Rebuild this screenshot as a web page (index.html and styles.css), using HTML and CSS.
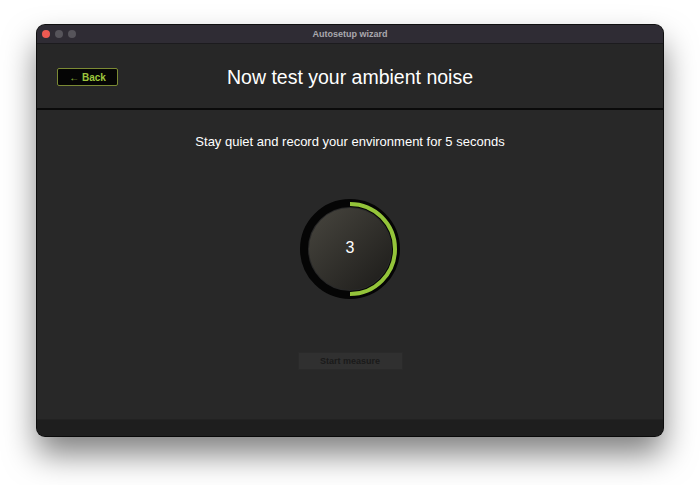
FILE: index.html
```html
<!DOCTYPE html>
<html>
  <head>
    <link rel="stylesheet" href="styles.css">
  </head>
  <body>
    <div class="window">
      <div class="titlebar">
        <div class="lights">
          <span class="light red"></span>
          <span class="light"></span>
          <span class="light"></span>
        </div>
        <div class="wintitle">Autosetup wizard</div>
      </div>

      <div class="header">
        <button class="back">&larr; Back</button>
        <h1>Now test your ambient noise</h1>
      </div>

      <div class="content">
        <p class="hint">Stay quiet and record your environment for 5 seconds</p>

        <div class="meter">
          <svg width="102" height="102" viewBox="0 0 102 102">
            <defs>
              <linearGradient id="face" x1="0" y1="0" x2="1" y2="1">
                <stop offset="0" stop-color="#48463f"/>
                <stop offset="1" stop-color="#1c1b19"/>
              </linearGradient>
            </defs>
            <circle cx="51" cy="51" r="46" fill="none" stroke="#050505" stroke-width="8"/>
            <path d="M51 6 A45 45 0 0 1 51 96" fill="none" stroke="#94c43a" stroke-width="4"/>
            <circle cx="51" cy="51" r="41" fill="url(#face)"/>
          </svg>
          <span class="count">3</span>
        </div>

        <button class="start" disabled>Start measure</button>
      </div>

      <div class="footer"></div>
    </div>
  </body>
</html>
```

FILE: styles.css
```css
html, body {
  min-height: 485px;
}
body {
  margin: 0;
  background-color: #ffffff;
  font-family: "Liberation Sans", Arial, sans-serif;
  padding: 25px 0 0 37px;
  box-sizing: border-box;
}
.window {
  width: 626px;
  height: 411px;
  background-color: #282828;
  border-radius: 8px;
  overflow: hidden;
  display: flex;
  flex-direction: column;
  box-shadow: 0 18px 32px rgba(0, 0, 0, 0.5), 0 0 0 1px #111;
}
.titlebar {
  height: 18px;
  background-color: #2f2c34;
  display: flex;
  align-items: center;
  justify-content: center;
  position: relative;
  border-bottom: 1px solid #1c1b1e;
}
.lights {
  position: absolute;
  left: 5px;
  top: 5px;
  display: flex;
  gap: 5px;
}
.light {
  width: 8px;
  height: 8px;
  border-radius: 50%;
  background-color: #56545a;
}
.light.red {
  background-color: #ee5a52;
}
.wintitle {
  color: #a9a8ad;
  font-size: 9px;
  font-weight: bold;
}
.header {
  height: 64px;
  display: flex;
  align-items: center;
  justify-content: center;
  position: relative;
  border-bottom: 2px solid #0a0a0a;
  background-color: #272727;
}
.back {
  position: absolute;
  left: 20px;
  top: 24px;
  width: 61px;
  height: 18px;
  background-color: #050505;
  border: 1px solid #7b8a34;
  border-radius: 2px;
  color: #9cc53d;
  font-family: "Liberation Sans", Arial, sans-serif;
  font-weight: bold;
  font-size: 10px;
  padding: 0;
}
h1 {
  margin: 0;
  color: #ffffff;
  font-weight: normal;
  font-size: 19.5px;
  margin-top: 2px;
}
.content {
  flex: 1;
  display: flex;
  flex-direction: column;
  align-items: center;
}
.hint {
  color: #ffffff;
  font-size: 13px;
  margin: 24px 0 0;
}
.meter {
  position: relative;
  width: 102px;
  height: 102px;
  margin-top: 49px;
}
.count {
  position: absolute;
  left: 0;
  right: 0;
  top: 41px;
  text-align: center;
  color: #ffffff;
  font-size: 16px;
}
.start {
  margin-top: 52px;
  width: 105px;
  height: 18px;
  background-color: #303030;
  border: 1px solid #2a2a2a;
  color: #1a1a1a;
  font-family: "Liberation Sans", Arial, sans-serif;
  font-weight: bold;
  font-size: 9px;
  padding: 0;
}
.footer {
  height: 16px;
  background-color: #1e1e1e;
  border-top: 1px solid #222;
}
```
